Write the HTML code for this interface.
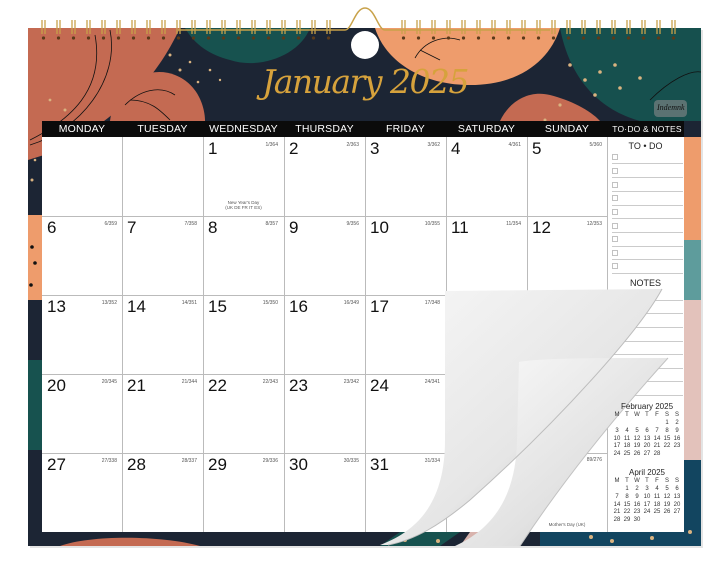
<!DOCTYPE html>
<html><head><meta charset="utf-8"><style>
*{margin:0;padding:0;box-sizing:border-box}
body{width:703px;height:565px;background:#fff;position:relative;overflow:hidden;font-family:"Liberation Sans",sans-serif}
.a{position:absolute}
.hd{position:absolute;top:121px;height:16px;color:#fff;font-size:10.5px;text-align:center;line-height:16px;letter-spacing:.2px}
.n{position:absolute;font-size:17px;color:#111}
.s{position:absolute;font-size:5px;color:#555;text-align:right;width:40px}
.mc{position:absolute;font-size:6px;color:#333;width:10px;text-align:center}
</style></head><body>
<svg class="a" style="left:0;top:0" width="703" height="565">
<defs>
<linearGradient id="g1" x1="0" y1="0" x2="1" y2="1"><stop offset="0" stop-color="#f7f7f7"/><stop offset=".55" stop-color="#e6e6e6"/><stop offset=".8" stop-color="#c9c9c9"/><stop offset="1" stop-color="#f2f2f2"/></linearGradient>
<linearGradient id="g2" x1="0" y1="0" x2="1" y2="1"><stop offset="0" stop-color="#fafafa"/><stop offset=".6" stop-color="#e2e2e2"/><stop offset=".85" stop-color="#cfcfcf"/><stop offset="1" stop-color="#f4f4f4"/></linearGradient>
<clipPath id="card"><rect x="28" y="28" width="673" height="518"/></clipPath>
</defs>
<rect x="30" y="30" width="673" height="518" fill="#e4e4e4"/>
<g clip-path="url(#card)">
<rect x="28" y="28" width="673" height="518" fill="#1c2534"/>
<path d="M28 28H180C160 70 130 110 60 150L28 160Z" fill="#c46a52"/>
<path d="M185 28H310C300 55 260 70 230 60C210 55 195 45 185 28Z" fill="#17524f"/>
<path d="M110 121C115 80 150 65 175 75C200 85 205 110 205 121Z" fill="#c46a52"/>
<path d="M375 28H560C550 60 520 85 470 85C420 85 385 60 375 28Z" fill="#ee9c6c"/>
<path d="M560 28H701V121H640C600 110 570 80 560 28Z" fill="#16504e"/>
<path d="M500 121C510 100 530 90 550 95C570 100 590 110 600 121Z" fill="#c46a52"/>
<path d="M28 215H45V300H28Z" fill="#ee9c6c"/>
<path d="M28 360H45V450H28Z" fill="#17524f"/>
<path d="M28 532H701V546H28Z" fill="#1c2534"/>
<path d="M60 546C90 535 160 535 200 546Z" fill="#c46a52"/>
<path d="M380 546L400 532H460L440 546Z" fill="#17524f"/>
<path d="M460 546L470 532H520L510 546Z" fill="#d8b3ad"/>
<path d="M540 532H701V546H540Z" fill="#124560"/>
<path d="M684 240H701V300H684Z" fill="#5e9c9c"/>
<path d="M684 300H701V460H684Z" fill="#e3c2bb"/>
<path d="M684 460H701V546H684Z" fill="#124560"/>
<path d="M684 137H701V240H684Z" fill="#ee9c6c"/>
<g fill="#d9b380">
<circle cx="170" cy="55" r="1.5"/><circle cx="180" cy="70" r="1.5"/><circle cx="190" cy="62" r="1.3"/><circle cx="198" cy="82" r="1.3"/><circle cx="210" cy="70" r="1.3"/><circle cx="220" cy="80" r="1.2"/>
<circle cx="570" cy="65" r="1.8"/><circle cx="585" cy="80" r="1.8"/><circle cx="600" cy="72" r="1.8"/><circle cx="615" cy="65" r="1.8"/><circle cx="595" cy="95" r="1.8"/><circle cx="620" cy="88" r="1.8"/><circle cx="640" cy="78" r="1.8"/><circle cx="560" cy="105" r="1.6"/><circle cx="545" cy="120" r="1.5"/>
<circle cx="65" cy="110" r="1.5"/><circle cx="50" cy="100" r="1.4"/><circle cx="32" cy="180" r="1.5"/><circle cx="35" cy="160" r="1.3"/>
<circle cx="405" cy="540" r="2"/><circle cx="438" cy="541" r="2"/><circle cx="591" cy="537" r="2"/><circle cx="612" cy="541" r="2"/><circle cx="652" cy="538" r="2"/><circle cx="690" cy="532" r="2"/>
</g>
<g fill="#111"><circle cx="32" cy="247" r="1.8"/><circle cx="35" cy="263" r="1.8"/><circle cx="31" cy="285" r="1.8"/></g>
<g fill="none" stroke="#111" stroke-width=".8">
<path d="M30 145C80 130 120 80 110 30"/><path d="M30 140C70 120 105 90 95 35"/>
<path d="M125 105C140 90 160 85 175 95"/><path d="M130 100C150 100 160 110 170 120"/>
<path d="M415 58C425 40 445 35 460 40"/><path d="M420 50L440 60"/>
<path d="M650 100C670 80 690 70 701 72"/>
</g>
</g>
<rect x="42" y="137" width="642" height="395" fill="#fff"/>
<rect x="42" y="121" width="642" height="16" fill="#0b0b0b"/>
<g stroke="#bbb" stroke-width="1">
<path d="M122.5 137V532M203.5 137V532M284.5 137V532M365.5 137V532M446.5 137V532M527.5 137V532M607.5 137V532"/>
<path d="M42 216.5H607M42 295.5H607M42 374.5H607M42 453.5H607"/>
</g>
<g stroke="#bbb" stroke-width=".8">
<path d="M612 163.5H683M612 177.5H683M612 191.5H683M612 205.5H683M612 218.5H683M612 232.5H683M612 246.5H683M612 259.5H683M612 273.5H683"/>
<path d="M612 300.5H683M612 313.5H683M612 327.5H683M612 341.5H683M612 354.5H683M612 368.5H683M612 381.5H683M612 395.5H683"/>
</g>
<g fill="#fff" stroke="#999" stroke-width=".6">
<rect x="612.5" y="154.5" width="5" height="5"/><rect x="612.5" y="168.5" width="5" height="5"/><rect x="612.5" y="182.5" width="5" height="5"/><rect x="612.5" y="195.5" width="5" height="5"/><rect x="612.5" y="209.5" width="5" height="5"/><rect x="612.5" y="223.5" width="5" height="5"/><rect x="612.5" y="236.5" width="5" height="5"/><rect x="612.5" y="250.5" width="5" height="5"/><rect x="612.5" y="263.5" width="5" height="5"/>
</g>
<!-- peel -->
<path d="M445 291L662 289C640 330 560 420 470 500C440 525 415 540 388 545L380 545C420 530 445 500 445 440Z" fill="url(#g1)"/>
<path d="M519 362C540 358 600 358 668 358C630 400 570 470 520 546H455C490 530 516 500 517 440Z" fill="url(#g2)"/>
<path d="M662 289C640 330 560 420 470 500C440 525 415 540 388 545" fill="none" stroke="#bdbdbd" stroke-width="1"/>
<path d="M668 358C630 400 570 470 520 546" fill="none" stroke="#c2c2c2" stroke-width="1"/>
<!-- spiral -->
<g stroke="#c8a24a" stroke-width="1.3" fill="none" id="coils"></g>
<path d="M178 30H345C352 30 355 8 365 8C375 8 378 30 385 30H550" stroke="#c8a24a" stroke-width="1.5" fill="none"/>
<g fill="#5a3a1a" id="holes"></g>
<circle cx="365" cy="45" r="14" fill="#fff"/>
<rect x="654" y="100" width="33" height="17" rx="4" fill="#6d7a7c" opacity=".8"/>
</svg>
<div class="a" style="left:657px;top:103px;font-family:'Liberation Serif',serif;font-style:italic;font-size:8px;color:#111">Indemnk</div>
<div class="a" style="left:200px;top:62px;width:330px;text-align:center;font-family:'DejaVu Serif',serif;font-style:italic;font-size:33px;color:#d6a23c;letter-spacing:-1.5px">January 2025</div>
<div class="hd" style="left:42px;width:80px">MONDAY</div>
<div class="hd" style="left:122px;width:81px">TUESDAY</div>
<div class="hd" style="left:203px;width:81px">WEDNESDAY</div>
<div class="hd" style="left:284px;width:81px">THURSDAY</div>
<div class="hd" style="left:365px;width:81px">FRIDAY</div>
<div class="hd" style="left:446px;width:81px">SATURDAY</div>
<div class="hd" style="left:527px;width:80px">SUNDAY</div>
<div class="hd" style="left:607px;width:80px;font-size:8.5px">TO·DO &amp; NOTES</div>
<div class="a" style="left:607px;top:141px;width:77px;text-align:center;font-size:9px;color:#222">TO • DO</div>
<div class="a" style="left:607px;top:278px;width:77px;text-align:center;font-size:9px;color:#222">NOTES</div>
<div id="days"></div>
<div class="a" style="left:203px;top:200px;width:81px;text-align:center;font-size:4.5px;color:#555;line-height:5px">New Year's Day<br>(UK DE FR IT ES)</div>
<div class="a" style="left:527px;top:522px;width:80px;text-align:center;font-size:4.5px;color:#555">Mother's Day (UK)</div>
<div class="s" style="left:562px;top:457px">89/276</div>
<div class="a" style="left:607px;top:402px;width:80px;text-align:center;font-size:8px;color:#222">February 2025</div>
<div class="a" style="left:607px;top:468px;width:80px;text-align:center;font-size:8px;color:#222">April 2025</div>
<div id="mini"></div>
<script>
var co='',ho='';
for(var x=42;x<=684;x+=15){if(x>335&&x<390)continue;co+='<path d="M'+x+' 20V34M'+(x+3)+' 20V34"/>';ho+='<circle cx="'+(x+1.5)+'" cy="38" r="1.6"/>';}
document.getElementById('coils').innerHTML=co;document.getElementById('holes').innerHTML=ho;
var cols=[42,122,203,284,365,446,527],rows=[137,216,295,374,453],h='';
for(var d=1;d<=31;d++){var i=d+1,c=i%7,r=Math.floor(i/7);var x=cols[c],y=rows[r];
if(d>=16&&((c==5&&r>=2)||(c==6&&r>=2)))continue;
h+='<div class="n" style="left:'+(x+5)+'px;top:'+(y+2)+'px">'+d+'</div>';
h+='<div class="s" style="left:'+(x+35)+'px;top:'+(y+5)+'px">'+d+'/'+(365-d)+'</div>';}
document.getElementById('days').innerHTML=h;
var m='',L=['M','T','W','T','F','S','S'];
function cal(y0,start,n){for(var k=0;k<7;k++)m+='<div class="mc" style="left:'+(612+k*10)+'px;top:'+y0+'px">'+L[k]+'</div>';
for(var d=1;d<=n;d++){var p=start+d-1,c=p%7,r=Math.floor(p/7);m+='<div class="mc" style="left:'+(612+c*10)+'px;top:'+(y0+8+r*7.8)+'px">'+d+'</div>';}}
cal(412,5,28);cal(478,1,30);
document.getElementById('mini').innerHTML=m;
</script>
</body></html>
